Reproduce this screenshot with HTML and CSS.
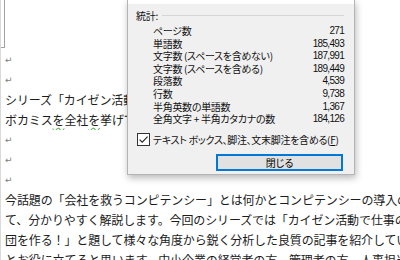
FILE: index.html
```html
<!DOCTYPE html>
<html lang="ja">
<head>
<meta charset="utf-8">
<link rel="stylesheet" href="styles.css">
</head>
<body>
<div class="corner"></div>
<div class="doc">
  <p class="line mark">↵</p>
  <p class="line mark">↵</p>
  <p class="line">シリーズ「カイゼン活動で仕事のムダを無くす」</p>
  <p class="line">ボカミス<span class="sq">を</span>全社<span class="sq">を</span>挙げて撲滅する！</p>
  <p class="line mark">↵</p>
  <p class="line mark">↵</p>
  <p class="line mark">↵</p>
  <p class="line">今話題の「会社を救うコンピテンシー」とは何かとコンピテンシーの導入の方法につい</p>
  <p class="line">て、分かりやすく解説します。今回のシリーズでは「カイゼン活動で仕事のムダを無</p>
  <p class="line">団を作る！」と題して様々な角度から鋭く分析した良質の記事を紹介していきます。</p>
  <p class="line">とお役に立てると思います。中小企業の経営者の方、管理者の方、人事担当の方</p>
</div>

<div class="dialog">
  <div class="title"></div>
  <div class="content">
    <div class="head"><span>統計:</span><span class="rule"></span></div>
    <div class="stats">
      <div class="row"><span>ページ数</span><span class="val">271</span></div>
      <div class="row"><span>単語数</span><span class="val">185,493</span></div>
      <div class="row"><span>文字数 (スペースを含めない)</span><span class="val">187,991</span></div>
      <div class="row"><span>文字数 (スペースを含める)</span><span class="val">189,449</span></div>
      <div class="row"><span>段落数</span><span class="val">4,539</span></div>
      <div class="row"><span>行数</span><span class="val">9,738</span></div>
      <div class="row"><span>半角英数の単語数</span><span class="val">1,367</span></div>
      <div class="row"><span>全角文字 + 半角カタカナの数</span><span class="val">184,126</span></div>
    </div>
    <div class="check">
      <svg class="box" width="13" height="13" viewBox="0 0 13 13">
        <rect x="0.5" y="0.5" width="12" height="12" fill="#fff" stroke="#333"/>
        <path d="M2.6 6.6 L5.2 9.2 L10.6 3.6" fill="none" stroke="#222" stroke-width="1.1"/>
      </svg>
      <span>テキスト ボックス、脚注、文末脚注を含める(<u>F</u>)</span>
    </div>
    <div class="btnrow"><button class="btn">閉じる</button></div>
  </div>
</div>
</body>
</html>
```
FILE: styles.css
```css
* { box-sizing: border-box; margin: 0; padding: 0; }
html, body { width: 400px; height: 260px; overflow: hidden; background: #fff; }
body {
  position: relative;
  border-left: 1px solid #dadada;
  font-family: "Noto Sans CJK JP", sans-serif;
}
.corner {
  width: 4px;
  height: 48px;
  border-right: 1px solid #a2a2a2;
  border-bottom: 1px solid #a2a2a2;
  margin-bottom: 2px;
}
.doc {
  padding-left: 4px;
  font-size: 12px;
  line-height: 20px;
  color: #1c1c1c;
  letter-spacing: -0.12px;
}
.line { height: 20px; white-space: nowrap; overflow: hidden; }
.mark { font-family: "DejaVu Sans", sans-serif; font-size: 9px; color: #7d7d7d; }
.sq { text-decoration: underline wavy #5fb35f; text-underline-offset: 2px; }

.dialog {
  position: absolute;
  left: 126px;
  top: 0;
  width: 228px;
  height: 175px;
  background: #f0f0f0;
  border: 1px solid #b4b4b4;
  border-top: none;
  box-shadow: 1px 3px 7px rgba(0,0,0,0.28);
  font-family: "Noto Sans CJK JP", sans-serif;
  font-size: 10px;
  font-feature-settings: "palt";
  letter-spacing: -0.3px;
  color: #111;
}
.title { height: 4px; background: #fff; }
.content { padding: 5px 10px 0 8px; }
.head { display: flex; align-items: center; height: 13px; gap: 4px; line-height: 13px; }
.rule { flex: 1; height: 1px; background: #d6d6d6; }
.stats { margin-top: 3px; padding-left: 17px; }
.row {
  display: flex;
  justify-content: space-between;
  align-items: center;
  height: 12.6px;
  line-height: 12.6px;
  white-space: nowrap;
}
.val { font-family: "Liberation Sans", sans-serif; font-size: 10px; letter-spacing: -0.7px; }
.check {
  margin-top: 7px;
  height: 13px;
  display: flex;
  align-items: center;
  gap: 3px;
  padding-left: 1px;
  white-space: nowrap;
  line-height: 13px;
}
.box { flex: none; }
.btnrow { margin-top: 8px; display: flex; justify-content: flex-end; padding-right: 1px; }
.btn {
  width: 127px;
  height: 17px;
  border: 2px solid #0078d7;
  background: #e1e1e1;
  font: inherit;
  letter-spacing: 0;
  color: #000;
  display: flex;
  align-items: center;
  justify-content: center;
  line-height: 13px;
}
```
